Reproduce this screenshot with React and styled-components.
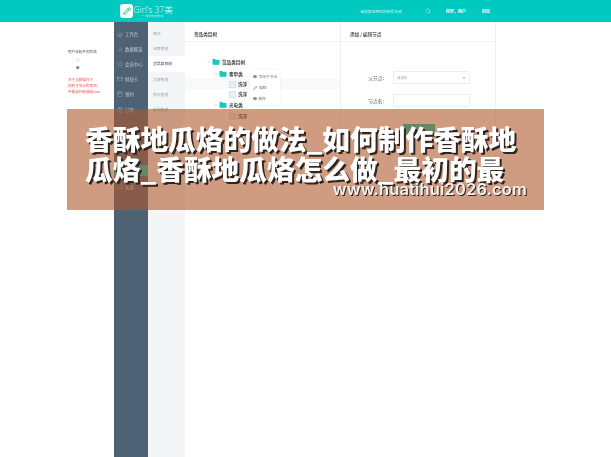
import React from "react"
import styled, { createGlobalStyle } from "styled-components"
import { Search, Pencil, Minus, Home, BarChart2, Star, CreditCard, Calendar, ClipboardList, MessageSquare, ChevronDown, Folder } from "lucide-react"

const GlobalStyle = createGlobalStyle`
    html, body {
        margin: 0;
        padding: 0;
        background: #fff;
        font-family: "Noto Sans CJK SC", "Liberation Sans", sans-serif;
        overflow: hidden;
    }
`
const Page = styled.div`
    width: 611px;
    height: 457px;
    position: relative;
    overflow: hidden;
`
const Shell = styled.div`
    height: 100%;
    display: flex;
    flex-direction: column;
    filter: blur(0.45px);
`
//================================//
const Header = styled.header`
    height: 22px;
    flex: none;
    background: #00cabf;
    display: flex;
    align-items: center;
    padding-left: 120px;
    color: #e8fbfa;
`
const LogoBox = styled.div`
    width: 13px;
    height: 14px;
    border-radius: 3px;
    background: #f4fdfb;
    display: flex;
    align-items: center;
    justify-content: center;
`
const LogoText = styled.div`
    width: 36px;
    margin-left: 2px;
    display: flex;
    flex-direction: column;
    align-items: center;
`
const LogoName = styled.span`
    font-family: "Open Sans", "Noto Sans CJK SC", sans-serif;
    font-size: 8.5px;
    line-height: 11px;
    font-weight: 300;
    white-space: nowrap;
`
const LogoSub = styled.span`
    font-size: 2px;
    line-height: 3px;
    white-space: nowrap;
    opacity: .8;
`
const SearchText = styled.span`
    margin-left: 189px;
    width: 65px;
    font-size: 3.8px;
    white-space: nowrap;
    color: #c9f5f2;
`
const HeaderLink = styled.span`
    font-size: 4px;
    font-weight: 700;
    white-space: nowrap;
    color: #fff;
    margin-left: ${(p) => p.gap}px;
`
//================================//
const Body = styled.div`
    flex: 1;
    display: flex;
    min-height: 0;
`
const NoteColumn = styled.aside`
    width: 114px;
    flex: none;
    box-sizing: border-box;
    padding: 27px 0 0 68px;
    font-size: 3.6px;
    line-height: 6px;
    color: #555;
`
const NoteTitle = styled.div`
    white-space: nowrap;
    margin-bottom: 2px;
`
const NoteDot = styled.div`
    margin: 0 0 2px 8px;
    color: #888;
`
const NoteRed = styled.div`
    margin-top: 6px;
    color: #ef4d4d;
    white-space: nowrap;
`
const Sidebar = styled.nav`
    width: 34px;
    flex: none;
    background: #4f6174;
    padding-top: 4px;
    display: flex;
    flex-direction: column;
    color: #c3ccd5;
`
const SideItem = styled.div`
    height: 15.2px;
    flex: none;
    display: flex;
    align-items: center;
    gap: 2px;
    padding-left: 3px;
    font-size: 4.4px;
    white-space: nowrap;
`
const SideGap = styled.div`
    height: 48px;
    flex: none;
`
const SideActive = styled.div`
    height: 11px;
    flex: none;
    background: #00cabf;
    margin-bottom: 3.5px;
`
const SubNav = styled.div`
    width: 37px;
    flex: none;
    background: #f3f5f7;
    padding-top: 4px;
    display: flex;
    flex-direction: column;
`
const SubItem = styled.div`
    height: 15.2px;
    display: flex;
    align-items: center;
    padding-left: 5px;
    font-size: 3.8px;
    white-space: nowrap;
    color: ${(p) => (p.$active ? "#333" : "#a2a6aa")};
    background: ${(p) => (p.$active ? "#fff" : "transparent")};
`
//================================//
const Content = styled.main`
    flex: 1;
    display: flex;
    align-items: flex-start;
`
const TreePanel = styled.section`
    width: 155px;
    height: 128px;
    flex: none;
    box-sizing: border-box;
    padding-top: 7px;
`
const FormPanel = styled.section`
    width: 156px;
    height: 128px;
    flex: none;
    box-sizing: border-box;
    padding-top: 7px;
    border-left: 1px solid #eef0f2;
    border-right: 1px solid #eef0f2;
`
const PanelTitle = styled.div`
    height: 12px;
    font-size: 4.6px;
    font-weight: 500;
    line-height: 10px;
    padding-left: ${(p) => p.$pad}px;
    color: #333;
    border-bottom: 1px solid #f1f3f4;
    white-space: nowrap;
`
const Tree = styled.div`
    position: relative;
    padding-top: 14px;
    display: flex;
    flex-direction: column;
`
const TreeRow = styled.div`
    height: ${(p) => p.$h || 11}px;
    display: flex;
    align-items: center;
    padding-left: ${(p) => p.$indent}px;
    font-size: 4.6px;
    font-weight: 700;
    color: #444;
    background: ${(p) => (p.$hl ? "#f7f9fb" : "transparent")};
    white-space: nowrap;
`
const Toggle = styled.span`
    width: 5px;
    color: #8a9a9a;
    display: flex;
`
const LeafBox = styled.span`
    width: 7px;
    height: 7px;
    margin-right: 2px;
    background: #eceef0;
    border: 1px solid #dcdfe3;
    box-sizing: border-box;
`
const FolderMark = styled(Folder)`
    margin-right: 2px;
    flex: none;
`
const Menu = styled.div`
    position: absolute;
    left: 65px;
    top: 28px;
    width: 30px;
    height: 35px;
    background: #fff;
    box-shadow: 0 0 4px rgba(0, 0, 0, .05);
    display: flex;
    flex-direction: column;
    padding-top: 1px;
    box-sizing: border-box;
`
const MenuItem = styled.div`
    height: 11px;
    display: flex;
    align-items: center;
    gap: 2px;
    padding-left: 3px;
    font-size: 3.8px;
    color: #777;
    white-space: nowrap;
`
const MenuDot = styled.span`
    width: 3.5px;
    height: 3.5px;
    border-radius: 50%;
    background: #8d9398;
    flex: none;
`
const Form = styled.div`
    padding-top: 29px;
    display: flex;
    flex-direction: column;
    gap: 10px;
`
const FormRow = styled.div`
    display: flex;
    align-items: center;
    height: 13px;
`
const FormLabel = styled.label`
    width: 52px;
    text-align: right;
    padding-right: 9px;
    box-sizing: border-box;
    font-size: 4.8px;
    color: #555;
    white-space: nowrap;
`
const FormInput = styled.div`
    width: 77px;
    height: 13px;
    box-sizing: border-box;
    border: 1px solid #eceff1;
    border-radius: 1px;
    display: flex;
    align-items: center;
    justify-content: space-between;
    padding: 0 3px;
    font-size: 3.4px;
    color: #aaa;
`
const SubmitBtn = styled.div`
    width: 32px;
    height: 10px;
    margin: 7px 0 0 62px;
    background: #00cabf;
`
//================================//
const Banner = styled.section`
    position: absolute;
    left: 67px;
    top: 109px;
    width: 477px;
    height: 101px;
    box-sizing: border-box;
    background: rgba(174, 87, 43, .59);
    padding: 14px 0 0 18px;
    color: #fff;
    filter: blur(0.3px);
`
const BannerLine = styled.div`
    font-family: "Noto Sans CJK SC", sans-serif;
    font-weight: 900;
    font-size: 27.7px;
    line-height: 30px;
    white-space: nowrap;
    text-shadow: 2px 2px 0 #2e2520;
`
const BannerUrl = styled.div`
    position: absolute;
    right: 17px;
    top: 69px;
    font-family: Inter, "Liberation Sans", sans-serif;
    font-weight: 600;
    font-size: 16.5px;
    line-height: 22px;
    letter-spacing: 0.15px;
    white-space: nowrap;
    color: #f4f1ee;
    text-shadow: 1px 1px 0 #2e2520;
`

const sideTop = [
    [Home, "工作台"], [BarChart2, "数据概览"], [Star, "会员中心"], [CreditCard, "财政卡"],
    [Calendar, "预约"], [ClipboardList, "订单"],
]
const subItems = ["概况", "包裹管理", "货品类目树", "货源管理", "库存管理", "采购管理"]

const FolderIcon = () => <FolderMark size={8} color="#19c9bd" fill="#19c9bd" strokeWidth={1} />

const App = () => {
    return (
        <Page>
            <GlobalStyle />
            <Shell>
                <Header>
                    <LogoBox>
                        <Pencil size={8} color="#25b86f" strokeWidth={2.5} />
                    </LogoBox>
                    <LogoText>
                        <LogoName>Girl's 37美</LogoName>
                        <LogoSub>一个懂你的女性购物平台</LogoSub>
                    </LogoText>
                    <SearchText>请搜索您想找的商品名称</SearchText>
                    <Search size={6} color="#d5f7f5" strokeWidth={1.5} />
                    <HeaderLink gap={15}>你好，用户</HeaderLink>
                    <HeaderLink gap={16}>退出</HeaderLink>
                </Header>
                <Body>
                    <NoteColumn>
                        <NoteTitle>用户收起不同状态</NoteTitle>
                        <NoteDot>○</NoteDot>
                        <NoteDot>●</NoteDot>
                        <NoteRed>
                            对于当前操作下<br />
                            如有子节点的项目，<br />
                            不能展开和收起icon
                        </NoteRed>
                    </NoteColumn>
                    <Sidebar>
                        {sideTop.map(([Icon, label]) => (
                            <SideItem key={label}>
                                <Icon size={6} strokeWidth={1.2} />
                                {label}
                            </SideItem>
                        ))}
                        <SideGap />
                        <SideActive />
                        <SideItem>
                            <MessageSquare size={6} strokeWidth={1.2} />
                            客服
                        </SideItem>
                    </Sidebar>
                    <SubNav>
                        {subItems.map((label, i) => (
                            <SubItem key={label} $active={i === 2}>{label}</SubItem>
                        ))}
                    </SubNav>
                    <Content>
                        <TreePanel>
                            <PanelTitle $pad={9}>货品类目树</PanelTitle>
                            <Tree>
                                <TreeRow $indent={22} $h={12}>
                                    <Toggle><Minus size={4} /></Toggle>
                                    <FolderIcon />货品类目树
                                </TreeRow>
                                <TreeRow $indent={29} $h={11}>
                                    <Toggle><Minus size={4} /></Toggle>
                                    <FolderIcon />素甲类
                                </TreeRow>
                                <TreeRow $indent={44} $h={10} $hl>
                                    <LeafBox />洗浮
                                </TreeRow>
                                <TreeRow $indent={44} $h={10}>
                                    <LeafBox />洗浮
                                </TreeRow>
                                <TreeRow $indent={29} $h={12}>
                                    <Toggle><Minus size={4} /></Toggle>
                                    <FolderIcon />光电类
                                </TreeRow>
                                <TreeRow $indent={44} $h={10}>
                                    <LeafBox />洗浮
                                </TreeRow>
                                <Menu>
                                    <MenuItem><MenuDot />添加子节点</MenuItem>
                                    <MenuItem><Pencil size={4} strokeWidth={2} color="#444" />编辑</MenuItem>
                                    <MenuItem><MenuDot />删除</MenuItem>
                                </Menu>
                            </Tree>
                        </TreePanel>
                        <FormPanel>
                            <PanelTitle $pad={9}>添加 / 编辑节点</PanelTitle>
                            <Form>
                                <FormRow>
                                    <FormLabel>父节点:</FormLabel>
                                    <FormInput>
                                        请选择
                                        <ChevronDown size={4} color="#555" strokeWidth={3} />
                                    </FormInput>
                                </FormRow>
                                <FormRow>
                                    <FormLabel>节点名:</FormLabel>
                                    <FormInput />
                                </FormRow>
                                <SubmitBtn />
                            </Form>
                        </FormPanel>
                    </Content>
                </Body>
            </Shell>
            <Banner>
                <BannerLine>香酥地瓜烙的做法_如何制作香酥地</BannerLine>
                <BannerLine>瓜烙_香酥地瓜烙怎么做_最初的最</BannerLine>
                <BannerUrl>www.huatihui2026.com</BannerUrl>
            </Banner>
        </Page>
    )
}

export default App
